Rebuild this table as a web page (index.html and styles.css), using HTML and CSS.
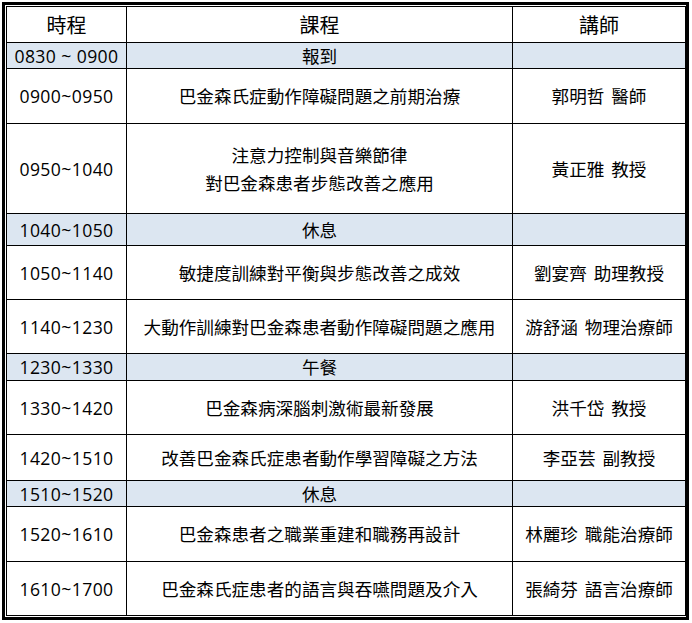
FILE: index.html
```html
<!DOCTYPE html>
<html lang="zh-Hant">
<head>
<meta charset="utf-8">
<title>課程表</title>
<link rel="stylesheet" href="styles.css">
</head>
<body>
<div class="frame">
<table class="schedule">
  <colgroup>
    <col class="c-time">
    <col class="c-course">
    <col class="c-teacher">
  </colgroup>
  <thead>
    <tr class="h-head">
      <th>時程</th>
      <th>課程</th>
      <th>講師</th>
    </tr>
  </thead>
  <tbody>
    <tr class="break h-26">
      <td class="time">0830 ~ 0900</td>
      <td>報到</td>
      <td></td>
    </tr>
    <tr class="h-55">
      <td class="time">0900~0950</td>
      <td>巴金森氏症動作障礙問題之前期治療</td>
      <td class="teacher">郭明哲 醫師</td>
    </tr>
    <tr class="h-90">
      <td class="time">0950~1040</td>
      <td>注意力控制與音樂節律<br>對巴金森患者步態改善之應用</td>
      <td class="teacher">黃正雅 教授</td>
    </tr>
    <tr class="break h-32">
      <td class="time">1040~1050</td>
      <td>休息</td>
      <td></td>
    </tr>
    <tr class="h-54">
      <td class="time">1050~1140</td>
      <td>敏捷度訓練對平衡與步態改善之成效</td>
      <td class="teacher">劉宴齊 助理教授</td>
    </tr>
    <tr class="h-54">
      <td class="time">1140~1230</td>
      <td>大動作訓練對巴金森患者動作障礙問題之應用</td>
      <td class="teacher">游舒涵 物理治療師</td>
    </tr>
    <tr class="break h-27">
      <td class="time">1230~1330</td>
      <td>午餐</td>
      <td></td>
    </tr>
    <tr class="h-54">
      <td class="time">1330~1420</td>
      <td>巴金森病深腦刺激術最新發展</td>
      <td class="teacher">洪千岱 教授</td>
    </tr>
    <tr class="h-46">
      <td class="time">1420~1510</td>
      <td>改善巴金森氏症患者動作學習障礙之方法</td>
      <td class="teacher">李亞芸 副教授</td>
    </tr>
    <tr class="break h-26">
      <td class="time">1510~1520</td>
      <td>休息</td>
      <td></td>
    </tr>
    <tr class="h-55">
      <td class="time">1520~1610</td>
      <td>巴金森患者之職業重建和職務再設計</td>
      <td class="teacher">林麗珍 職能治療師</td>
    </tr>
    <tr class="h-54">
      <td class="time">1610~1700</td>
      <td>巴金森氏症患者的語言與吞嚥問題及介入</td>
      <td class="teacher">張綺芬 語言治療師</td>
    </tr>
  </tbody>
</table>
</div>
</body>
</html>
```

FILE: styles.css
```css
html, body {
  margin: 0;
  padding: 0;
  background: #ffffff;
}

.frame {
  margin: 2px;
  width: 679px;
  border: 3px solid #000;
  padding: 1px;
}

.schedule {
  width: 679px;
  border-collapse: collapse;
  table-layout: fixed;
  border: 1px solid #000;
  font-family: "Noto Sans CJK TC", "Noto Sans", sans-serif;
  font-size: 17.6px;
  line-height: 28px;
  color: #000;
}

.c-time { width: 120px; }
.c-course { width: 386px; }
.c-teacher { width: 173px; }

.schedule th,
.schedule td {
  border: 1px solid #000;
  padding: 0;
  text-align: center;
  vertical-align: middle;
}

.schedule th {
  font-size: 20px;
  font-weight: normal;
}

.schedule .time {
  font-family: "Open Sans", "Noto Sans CJK TC", sans-serif;
  letter-spacing: 0.4px;
  white-space: pre;
}

.schedule .teacher {
  word-spacing: 3px;
}

.break td {
  background: #dce6f1;
  line-height: 22px;
}

.h-head { height: 36px; }
.h-26 { height: 26px; }
.h-27 { height: 27px; }
.h-32 { height: 32px; }
.h-46 { height: 46px; }
.h-54 { height: 54px; }
.h-55 { height: 55px; }
.h-90 { height: 90px; }
```
